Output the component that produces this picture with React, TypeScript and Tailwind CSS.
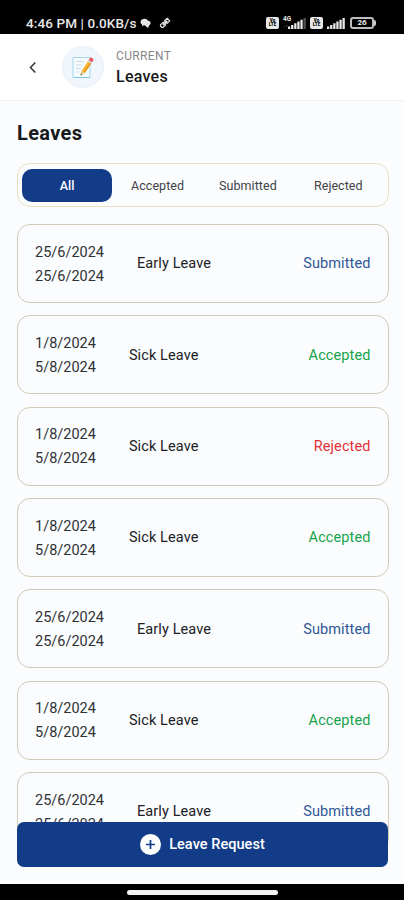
import { useState } from "react";
import { clsx } from "clsx";

type LeaveStatus = "Accepted" | "Submitted" | "Rejected";

type Leave = {
  id: number;
  from: string;
  to: string;
  type: string;
  status: LeaveStatus;
};

const TABS = ["All", "Accepted", "Submitted", "Rejected"] as const;

const STATUS_COLORS: Record<LeaveStatus, string> = {
  Accepted: "text-[#16a34a]",
  Submitted: "text-[#2f5795]",
  Rejected: "text-[#e03137]"
};

const LEAVES: Leave[] = [
  { id: 1, from: "25/6/2024", to: "25/6/2024", type: "Early Leave", status: "Submitted" },
  { id: 2, from: "1/8/2024", to: "5/8/2024", type: "Sick Leave", status: "Accepted" },
  { id: 3, from: "1/8/2024", to: "5/8/2024", type: "Sick Leave", status: "Rejected" },
  { id: 4, from: "1/8/2024", to: "5/8/2024", type: "Sick Leave", status: "Accepted" },
  { id: 5, from: "25/6/2024", to: "25/6/2024", type: "Early Leave", status: "Submitted" },
  { id: 6, from: "1/8/2024", to: "5/8/2024", type: "Sick Leave", status: "Accepted" },
  { id: 7, from: "25/6/2024", to: "25/6/2024", type: "Early Leave", status: "Submitted" }
];

export default function App() {
  const [activeTab, setActiveTab] = useState<(typeof TABS)[number]>("All");
  const visibleLeaves = LEAVES.filter((leave) => activeTab === "All" || leave.status === activeTab);

  return (
    <div className="flex h-[900px] w-[404px] flex-col overflow-hidden bg-[#fafcfe] font-['Roboto',sans-serif] text-[#202124]">
      <StatusBar />
      <Header />

      <main className="relative flex min-h-0 flex-1 flex-col overflow-hidden px-[17px] pt-[18px]">
        <h1 className="text-xl leading-7 font-bold tracking-[0.35px] text-[#17191c]">Leaves</h1>

        <div className="mt-4 grid h-[44px] w-[371.5px] shrink-0 grid-cols-4 rounded-[13px] border-[1.5px] border-[#e8dfc0] px-1 pt-[5px] pb-1">
          {TABS.map((tab) => (
            <button
              key={tab}
              type="button"
              onClick={() => setActiveTab(tab)}
              className={clsx(
                "rounded-[10px] pt-px text-[12.5px] tracking-[0.05px]",
                tab === activeTab ? "bg-[#123c87] font-medium text-white" : "text-[#414347]"
              )}
            >
              {tab}
            </button>
          ))}
        </div>

        <div className="mt-[17px] flex w-[371.5px] flex-col gap-[12.33px]">
          {visibleLeaves.map((leave) => (
            <LeaveCard key={leave.id} leave={leave} />
          ))}
        </div>

        <button
          type="button"
          className="absolute bottom-[17px] left-[17px] flex h-[45px] w-[371px] items-center justify-center gap-2 rounded-[7px] bg-[#123c87] text-[14.5px] font-medium tracking-[0.05px] text-white"
        >
          <PlusCircleIcon />
          <span className="pt-px">Leave Request</span>
        </button>
      </main>

      <div className="flex h-4 shrink-0 justify-center bg-black pt-[6px]">
        <div className="h-[5px] w-[151px] rounded-full bg-[#f4f4f4]" />
      </div>
    </div>
  );
}

function LeaveCard({ leave }: { leave: Leave }) {
  return (
    <div className="flex h-[79px] shrink-0 items-center rounded-[13px] border border-[#d2ccb4] px-[17px] pt-[1.5px] text-[14.5px]">
      <div className="pt-px leading-6 text-[#303236]">
        <p>{leave.from}</p>
        <p>{leave.to}</p>
      </div>
      <p className="ml-[33px] tracking-[0.1px]">{leave.type}</p>
      <p className={clsx("ml-auto tracking-[0.1px]", STATUS_COLORS[leave.status])}>{leave.status}</p>
    </div>
  );
}

function Header() {
  return (
    <header className="flex h-[67px] shrink-0 items-center border-b border-[#edf1f4] bg-white pl-[27px]">
      <button type="button" aria-label="Back">
        <svg width="12" height="14" viewBox="0 0 12 14" fill="none" stroke="#303236" strokeWidth="1.5">
          <path d="M8.3 2.500 3.500 7.500l4.800 5" />
        </svg>
      </button>
      <div className="ml-[23px] flex size-[42px] items-center justify-center rounded-full border border-[#e9f0f7] bg-[#f0f6fc]">
        <MemoIcon />
      </div>
      <div className="ml-[12px] pb-px">
        <p className="text-[12px] leading-[18px] tracking-[0.35px] text-[#858789]">CURRENT</p>
        <p className="pt-px text-[16px] leading-[21px] font-medium tracking-[0.25px] text-[#17191c]">Leaves</p>
      </div>
    </header>
  );
}

function StatusBar() {
  return (
    <div className="flex h-[34px] shrink-0 items-center bg-black pt-[12px] pl-[26px] text-[#e8e8e8]">
      <p className="text-[13.5px] leading-4 font-medium tracking-[0.1px]">4:46 PM | 0.0KB/s</p>
      <svg className="ml-[4px]" width="11" height="11" viewBox="0 0 11 11" fill="currentColor">
        <path d="M4.5.7C2.2.7.5 2 .5 4c0 1.200.7 2 1.600 2.600L2 8.300l1.800-1.100C6.500 7.500 8.300 6 8.300 4S6.700.7 4.500.7Z" />
        <path d="M8 2.500c1.600.4 2.600 1.300 2.600 2.500 0 .9-.5 1.600-1.200 2l-1.400 3-1.800-1.600-1.700-1.400 3-1Z" />
      </svg>
      <svg className="ml-[8px]" width="12" height="12" viewBox="0 0 12 12" fill="none" stroke="currentColor">
        <path d="M1.500 7.800 4 5.300l2.600 2.600-2.500 2.500-1.300-.1-1.300-1.300ZM5.500 4l2.700-2.700 2.500 2.500L8 6.500Z" strokeWidth="1.200" />
        <path d="m4 8 4.200-4.200" strokeWidth="1.800" />
      </svg>

      <div className="ml-auto flex items-center pr-[28px]">
        <SimBadge />
        <div className="relative ml-[4px] h-3 w-[23px]">
          <span className="absolute -top-[1px] left-0 text-[6.5px] leading-[6px] font-bold">4G</span>
          <span className="absolute bottom-0 left-0 text-[5px] leading-[5px] text-[#888888]">↓↑</span>
          <div className="absolute right-0 bottom-0">
            <SignalBars />
          </div>
        </div>
        <div className="ml-[4px]">
          <SimBadge />
        </div>
        <div className="ml-[4px]">
          <SignalBars strong />
        </div>
        <div className="ml-[5px] flex h-[12px] w-[24px] items-center justify-center rounded-[3px] border-2 border-[#bdbdbd] bg-black text-[8px] leading-none font-bold">
          26
        </div>
        <div className="h-[6px] w-[2px] rounded-r-sm bg-[#cfcfcf]" />
      </div>
    </div>
  );
}

function SimBadge() {
  return (
    <div className="flex h-[12px] w-[13px] flex-col items-center justify-center rounded-[2px] bg-[#e8e8e8] text-[4.5px] leading-[4.5px] font-black text-black">
      <span>Vo</span>
      <span>LTE</span>
    </div>
  );
}

function SignalBars({ strong = false }: { strong?: boolean }) {
  return (
    <svg width="18" height="12" viewBox="0 0 18 12" fill="currentColor" className="block">
      <path d="M0 9.500h2.300V12H0ZM3.100 8h2.300v4H3.100ZM6.200 6.300h2.300V12H6.200ZM9.300 4.500h2.300V12H9.300ZM12.400 2.800h2.300V12h-2.300Z" />
      <path d="M15.500 1h2.300v11h-2.300Z" opacity={strong ? 1 : 0.35} />
    </svg>
  );
}

function MemoIcon() {
  return (
    <svg width="22" height="24" viewBox="0 0 22 24" fill="none">
      <path d="M1 2.500h17v20H1Z" fill="#f5fafd" stroke="#a4d5ea" />
      <path d="M1 22.500h17" stroke="#80c5e3" />
      <path d="M4 6.500h8M4 10h6M4 13.500h5M4 17h3" stroke="#cbdce5" />
      <path d="m8.500 20.500 1.300-4.800 7-10.700 3.300 2.300-7.100 10.500-4.500 2.700Z" fill="#f8b528" />
      <path d="m11.600 17 6.900-10.600 1.600.9-7.100 10.500Z" fill="#ed9827" />
      <path d="m8.500 20.500 1.300-4.800 3.200 2.100-4.500 2.700Z" fill="#edc891" />
      <path d="m8.500 20.500.5-2 1.200.9Z" fill="#4c4541" />
      <path d="m15.700 6.500 1.100-1.600 3.300 2.300L19 8.800Z" fill="#d5dce0" />
      <path d="m16.800 4.900 1-1.700c.5-.8 1.200-.9 1.900-.4l1 .7c.8.6.9 1.300.4 2l-1 1.700Z" fill="#e9505e" />
    </svg>
  );
}

function PlusCircleIcon() {
  return (
    <svg width="21" height="21" viewBox="0 0 21 21" fill="none">
      <circle cx="10.500" cy="10.500" r="10.500" fill="white" />
      <path d="M10.500 6v9M6 10.500h9" stroke="#123c87" strokeWidth="1.700" />
    </svg>
  );
}
